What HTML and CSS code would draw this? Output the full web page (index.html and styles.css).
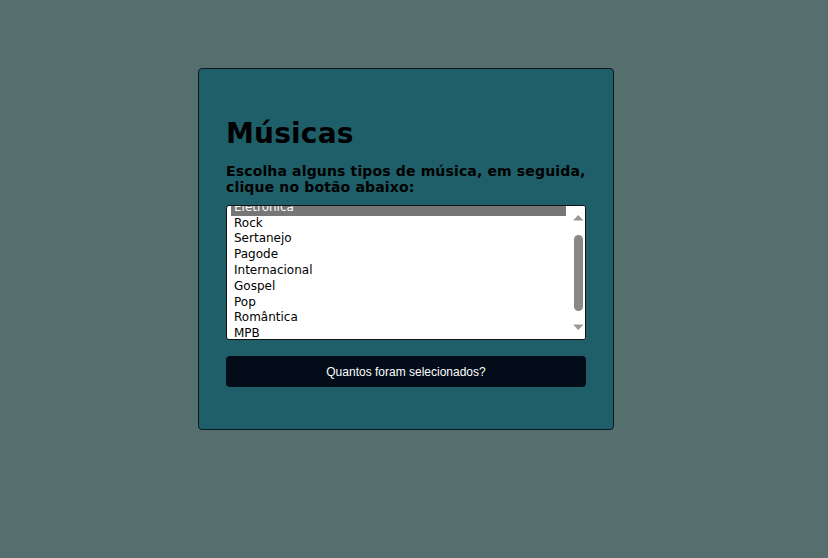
FILE: index.html
```html
<!DOCTYPE html>
<html lang="pt-BR">
<head>
<meta charset="utf-8">
<title>Músicas</title>
<link rel="stylesheet" href="styles.css">
</head>
<body>
<div class="page">
  <div class="card">
    <h1 class="title">Músicas</h1>
    <p class="lead">Escolha alguns tipos de música, em seguida, clique no botão abaixo:</p>
    <div class="list" role="listbox" aria-multiselectable="true">
      <div class="list-view" id="musicas">
        <div class="opt">Funk</div>
        <div class="opt selected">Eletrônica</div>
        <div class="opt">Rock</div>
        <div class="opt">Sertanejo</div>
        <div class="opt">Pagode</div>
        <div class="opt">Internacional</div>
        <div class="opt">Gospel</div>
        <div class="opt">Pop</div>
        <div class="opt">Romântica</div>
        <div class="opt">MPB</div>
        <div class="opt">Rap</div>
      </div>
      <div class="sbar">
        <div class="sbar-up">
          <svg width="11" height="6" viewBox="0 0 11 6"><polygon points="0,5.5 10.5,5.5 5.25,0" fill="#999999"/></svg>
        </div>
        <div class="sbar-thumb"></div>
        <div class="sbar-down">
          <svg width="11" height="6" viewBox="0 0 11 6"><polygon points="0,0.5 10.5,0.5 5.25,6" fill="#999999"/></svg>
        </div>
      </div>
    </div>
    <button class="btn" type="button">Quantos foram selecionados?</button>
  </div>
</div>
<script src="script.js"></script>
</body>
</html>
```
FILE: styles.css
```css
html, body {
  margin: 0;
  padding: 0;
}
body {
  background: #546f6e;
  font-family: "DejaVu Sans", Verdana, sans-serif;
}
.page {
  padding: 68px 0 0 198px;
}
.card {
  width: 360px;
  padding: 48px 27px 42px 27px;
  background: #1e5f69;
  border: 1px solid #0b1a1c;
  border-radius: 4px;
  display: flex;
  flex-direction: column;
}
.title {
  margin: 0;
  font-size: 28px;
  font-weight: bold;
  color: #000;
  line-height: normal;
  letter-spacing: 0.2px;
}
.lead {
  margin: 13px 0 0 0;
  font-size: 14px;
  font-weight: bold;
  color: #000;
  line-height: normal;
  letter-spacing: 0.15px;
}
.list {
  margin-top: 10px;
  width: 360px;
  height: 135px;
  box-sizing: border-box;
  border: 1px solid #111;
  border-radius: 3px;
  background: #fff;
  display: flex;
  overflow: hidden;
}
.list-view {
  flex: 1;
  overflow: hidden;
  padding: 4px 4px 4px 4px;
  font-family: "DejaVu Sans", Verdana, sans-serif;
  font-size: 12px;
  color: #000;
}
.opt {
  height: 15.8px;
  line-height: 15.8px;
  padding-left: 3px;
  white-space: nowrap;
}
.opt.selected {
  background: #777;
  color: #fff;
}
.sbar {
  width: 15px;
  display: flex;
  flex-direction: column;
  align-items: center;
  background: #fff;
}
.sbar-up {
  height: 29px;
  display: flex;
  align-items: flex-start;
  padding-top: 9px;
  box-sizing: border-box;
  padding-left: 1px;
}
.sbar-thumb {
  width: 9px;
  height: 76px;
  border-radius: 4.5px;
  background: #888;
  margin-left: 1px;
}
.sbar-down {
  flex: 1;
  display: flex;
  align-items: flex-end;
  padding-bottom: 9px;
  box-sizing: border-box;
  padding-left: 1px;
}
.sbar svg {
  display: block;
}
.btn {
  margin-top: 16px;
  width: 360px;
  height: 31px;
  border: none;
  border-radius: 4px;
  background: #020d19;
  color: #fff;
  font-family: "Liberation Sans", Arial, sans-serif;
  font-size: 12px;
}
```
FILE: script.js
```js
document.getElementById('musicas').scrollTop = 26;
```
